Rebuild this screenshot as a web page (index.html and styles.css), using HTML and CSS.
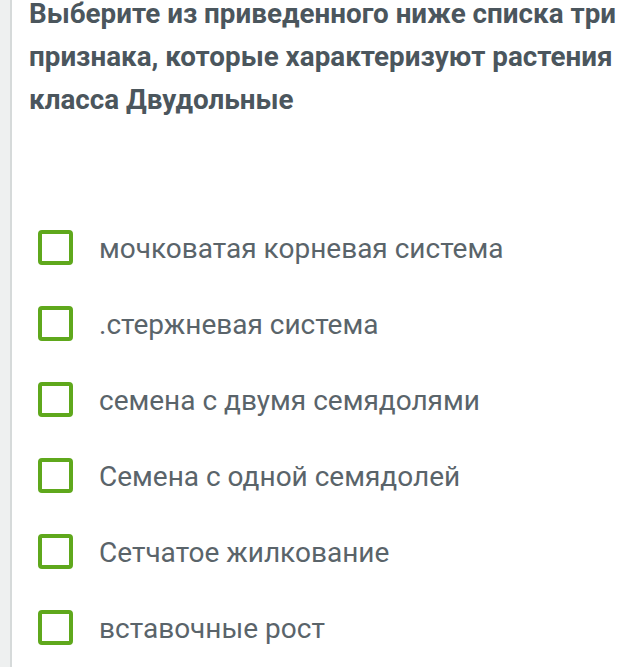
FILE: index.html
```html
<!DOCTYPE html>
<html lang="ru">
<head>
    <meta charset="UTF-8">
    <meta name="viewport" content="width=device-width, initial-scale=1.0">
    <title>Вопрос</title>
    <link rel="stylesheet" href="styles.css">
</head>
<body>
    <div class="page">
        <div class="side"></div>
        <div class="question">
            <h2 class="question-title">Выберите из приведенного ниже списка три<br>признака, которые характеризуют растения<br>класса Двудольные</h2>
            <ul class="options">
                <li>
                    <span class="box"></span>
                    <span class="label">мочковатая корневая система</span>
                </li>
                <li>
                    <span class="box"></span>
                    <span class="label">.стержневая система</span>
                </li>
                <li>
                    <span class="box"></span>
                    <span class="label">семена с двумя семядолями</span>
                </li>
                <li>
                    <span class="box"></span>
                    <span class="label">Семена с одной семядолей</span>
                </li>
                <li>
                    <span class="box"></span>
                    <span class="label">Сетчатое жилкование</span>
                </li>
                <li>
                    <span class="box"></span>
                    <span class="label">вставочные рост</span>
                </li>
            </ul>
        </div>
    </div>
</body>
</html>
```

FILE: styles.css
```css
body {
    margin: 0;
    padding: 0;
    background: #fff;
    font-family: Roboto, "Noto Sans", sans-serif;
    overflow: hidden;
}

.page {
    display: flex;
    min-height: 100vh;
}

.side {
    width: 10px;
    flex-shrink: 0;
    background: #eef0f0;
    border-right: 2px solid #d6dada;
}

.question {
    flex: 1;
    min-width: 0;
    padding-left: 17px;
}

.question-title {
    margin: -8px 0 0;
    font-size: 27.8px;
    font-weight: 700;
    line-height: 43px;
    color: #4b565d;
    white-space: nowrap;
}

.options {
    list-style: none;
    margin: 88px 0 0;
    padding: 0 0 0 9px;
}

.options li {
    display: flex;
    align-items: center;
    height: 76px;
}

.box {
    width: 35px;
    height: 35px;
    box-sizing: border-box;
    border: 4px solid #5fa81c;
    border-radius: 4px;
    flex-shrink: 0;
}

.label {
    margin-left: 26px;
    padding-top: 3px;
    font-size: 28px;
    line-height: 30px;
    color: #5a646a;
}
```
